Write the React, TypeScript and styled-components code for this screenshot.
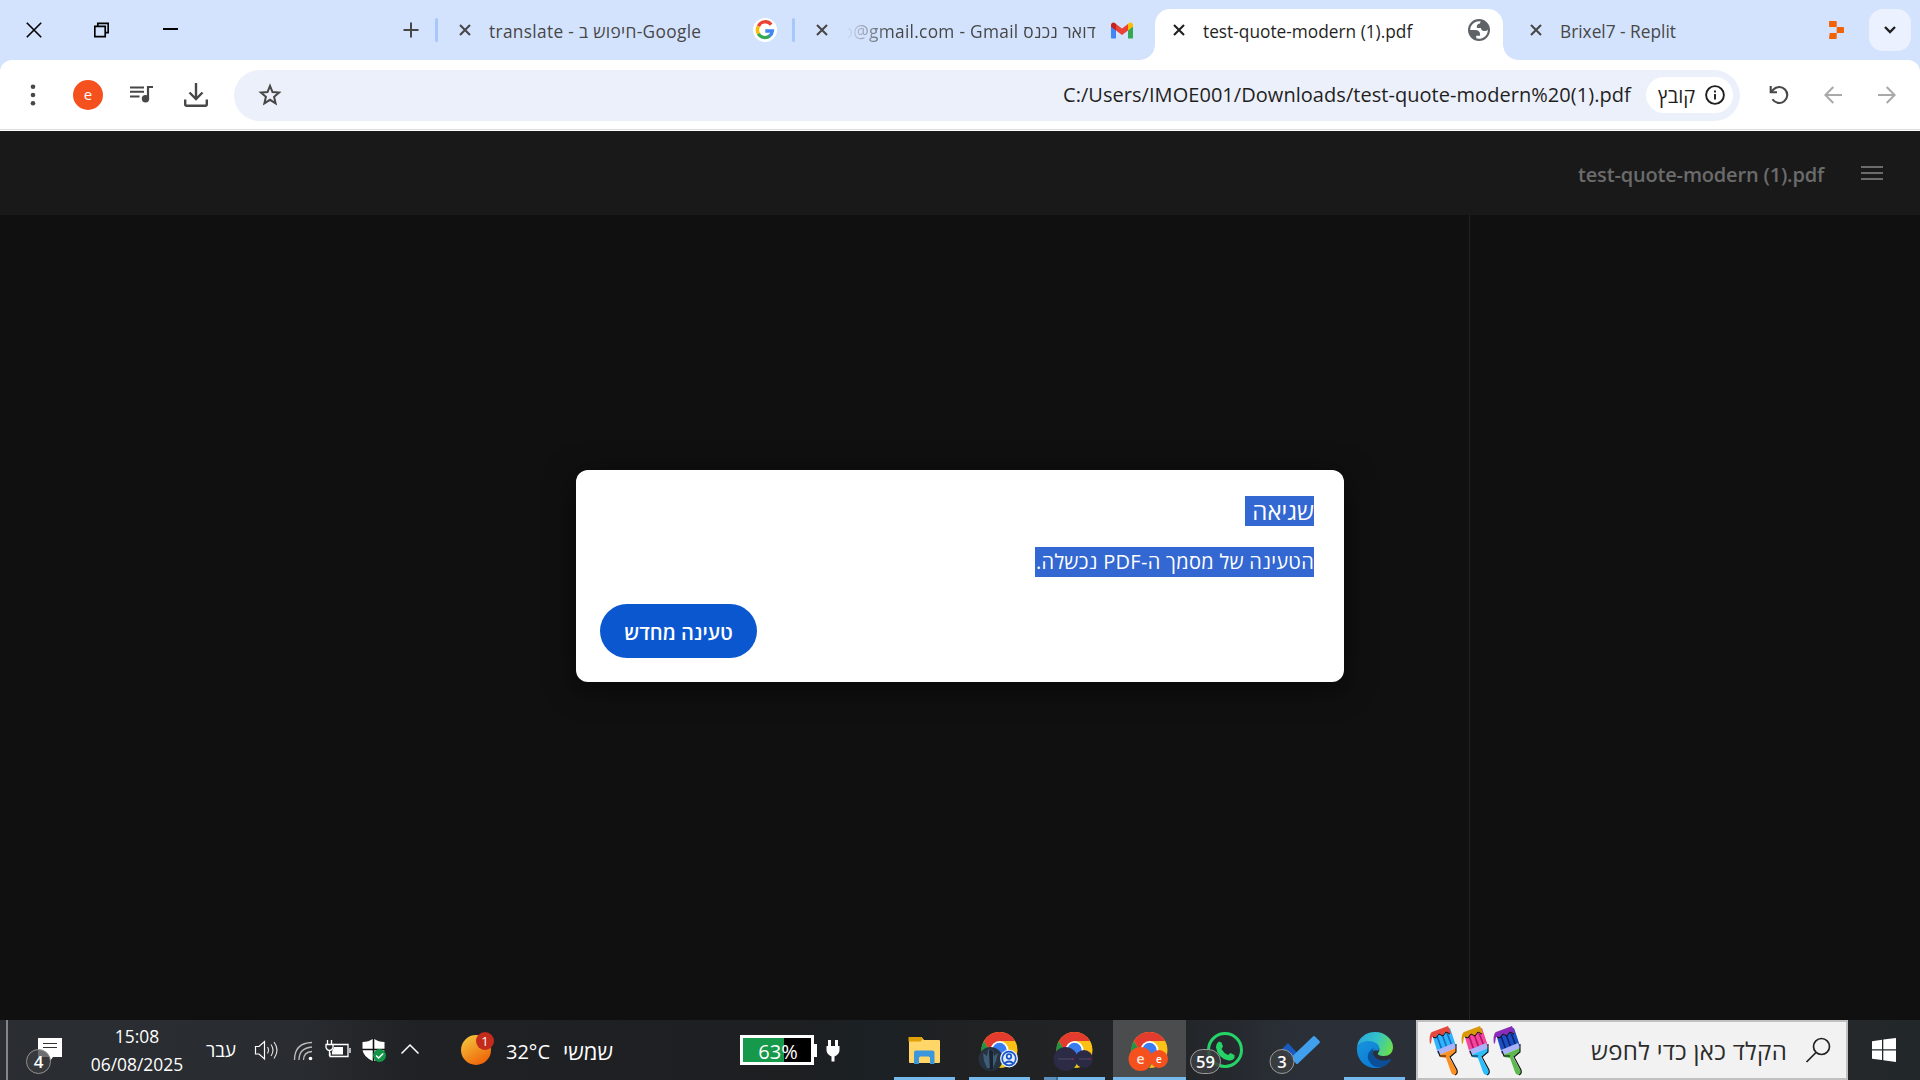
import React from "react";
import styled, { createGlobalStyle } from "styled-components";

const GlobalStyle = createGlobalStyle`
  * { box-sizing: border-box; }
  body { margin: 0; background: #101010; overflow: hidden; }
  body, input, button { font-family: "Open Sans", "Noto Sans", "DejaVu Sans", sans-serif; }
  svg { display: block; flex: none; }
`;

const Screen = styled.div`
  width: 1920px;
  height: 1080px;
  display: flex;
  flex-direction: column;
  overflow: hidden;
`;

/* ---------- shared ---------- */

const Slot = styled.div<{ $gap?: number }>`
  flex: none;
  margin-left: ${(p) => p.$gap ?? 0}px;
`;

type IconProps = { box: [number, number, number, number]; gap?: number; children: React.ReactNode };
const Icon = ({ box, gap, children }: IconProps) => (
  <Slot $gap={gap}>
    <svg width={box[2]} height={box[3]} viewBox={box.join(" ")} fill="none">
      {children}
    </svg>
  </Slot>
);

const Text = styled.span<{ $w: number; $gap?: number; $ls?: number; $dy?: number }>`
  flex: none;
  width: ${(p) => p.$w}px;
  margin-left: ${(p) => p.$gap ?? 0}px;
  margin-top: ${(p) => p.$dy ?? 0}px;
  letter-spacing: ${(p) => p.$ls ?? 0}px;
  white-space: pre;
`;

/* ---------- tab strip ---------- */

const TabStrip = styled.div`
  flex: none;
  height: 60px;
  display: flex;
  align-items: center;
  background: #d3e3fd;
`;

const Tab = styled.div<{ $w: number }>`
  flex: none;
  width: ${(p) => p.$w}px;
  height: 60px;
  display: flex;
  align-items: center;
`;

const ActiveTab = styled(Tab)`
  height: 51px;
  margin-top: 9px;
  padding-bottom: 9px;
  background: #fff;
  border-radius: 15px 15px 0 0;
  position: relative;
  &::before,
  &::after {
    content: "";
    position: absolute;
    bottom: 0;
    width: 15px;
    height: 15px;
  }
  &::before {
    left: -15px;
    background: radial-gradient(circle at 0 0, transparent 14.5px, #fff 15px);
  }
  &::after {
    right: -15px;
    background: radial-gradient(circle at 100% 0, transparent 14.5px, #fff 15px);
  }
`;

const TabTitle = styled(Text)<{ $active?: boolean; $fade?: boolean }>`
  font-size: 17.3px;
  line-height: 24px;
  color: ${(p) => (p.$active ? "#1f1f1f" : "#474747")};
  ${(p) =>
    p.$fade &&
    `direction: rtl; overflow: hidden; mask-image: linear-gradient(to right, transparent, #000 44px);`}
`;

const Separator = styled.div<{ $gap?: number }>`
  flex: none;
  width: 3px;
  height: 24px;
  margin-left: ${(p) => p.$gap ?? 0}px;
  border-radius: 2px;
  background: #a8c7fa;
`;

const TabSearch = styled.button`
  flex: none;
  width: 42px;
  height: 42px;
  margin-left: 25px;
  padding: 0;
  border: 0;
  border-radius: 14px;
  background: #ebf1fe;
  display: flex;
  align-items: center;
  justify-content: center;
`;

const CloseIcon = ({ gap, color = "#474747" }: { gap: number; color?: string }) => (
  <Icon box={[0, 0, 12, 12]} gap={gap}>
    <path d="M1 1l10 10M11 1L1 11" stroke={color} strokeWidth="2.1" />
  </Icon>
);

/* ---------- toolbar ---------- */

const ToolbarBack = styled.div`
  flex: none;
  background: #d3e3fd;
`;

const Toolbar = styled.div`
  height: 71px;
  padding-bottom: 1px;
  display: flex;
  align-items: center;
  background: #fff;
  border-radius: 12px 12px 0 0;
  box-shadow: inset 0 -1px #fff, inset 0 -2px #dcdcdc;
`;

const Avatar = styled.div`
  flex: none;
  width: 30px;
  height: 30px;
  margin-left: 37px;
  border-radius: 50%;
  background: #f4511e;
  color: #fff;
  font-size: 15px;
  line-height: 29px;
  text-align: center;
`;

const AddressBar = styled.div`
  flex: none;
  width: 1506px;
  height: 51px;
  margin-left: 26px;
  border-radius: 26px;
  background: #ecf0fa;
  display: flex;
  align-items: center;
`;

const Url = styled(Text)`
  font-size: 20px;
  line-height: 30px;
  color: #1f1f1f;
`;

const Chip = styled.div`
  flex: none;
  width: 87px;
  height: 36px;
  margin-left: 15px;
  border-radius: 18px;
  background: #fff;
  color: #1f1f1f;
  font-size: 20px;
  display: flex;
  align-items: center;
`;

/* ---------- document viewer ---------- */

const PdfBar = styled.div`
  flex: none;
  height: 84px;
  background: #191919;
  display: flex;
  align-items: center;
`;

const PdfTitle = styled(Text)`
  font-size: 20px;
  line-height: 28px;
  font-weight: 600;
  color: #6b6b6b;
`;

const Viewer = styled.div`
  flex: 1;
  display: grid;
  grid-template-columns: 1469px 1fr;
  background: #101010;
  position: relative;
`;

const Sidebar = styled.div`
  grid-column: 2;
  border-left: 1px solid #232323;
`;

const Dialog = styled.div`
  position: absolute;
  left: 576px;
  top: 255px;
  width: 768px;
  height: 212px;
  padding: 26px 30px 24px 24px;
  border-radius: 12px;
  background: #fff;
  box-shadow: 0 6px 30px rgba(0, 0, 0, 0.55);
  direction: rtl;
  display: flex;
  flex-direction: column;
  align-items: flex-start;
`;

const DialogTitle = styled.div`
  height: 30px;
  width: 69px;
  background: #3367d1;
  color: #fff;
  font-size: 24px;
  line-height: 30px;
  white-space: pre;
`;

const DialogText = styled.div`
  height: 30px;
  width: 279px;
  margin-top: 21px;
  background: #3367d1;
  color: #fff;
  font-size: 20px;
  letter-spacing: 0.3px;
  line-height: 30px;
  white-space: pre;
`;

const ReloadButton = styled.button`
  align-self: flex-end;
  width: 157px;
  height: 54px;
  margin-top: 27px;
  padding: 2px 0 0;
  border: 0;
  border-radius: 27px;
  background: #0b57d0;
  color: #fff;
  font-size: 20px;
  font-weight: 600;
  white-space: nowrap;
`;

/* ---------- taskbar ---------- */

const Taskbar = styled.div`
  flex: none;
  height: 60px;
  display: flex;
  align-items: center;
  color: #fff;
  background: linear-gradient(90deg, #2a2d31 0, #292c30 300px, #1f2124 420px, #1d1f21 800px, #1b2125 880px, #202122 960px, #222528 1180px, #2b3038 1300px, #2b3038 1410px, #24282b 1850px, #22272a 1920px);
`;

const DesktopEdge = styled.div`
  width: 2px;
  height: 60px;
  margin-left: 6px;
  background: #858585;
`;

const Clock = styled.div`
  flex: none;
  width: 96px;
  margin-left: 25px;
  font-size: 17.4px;
  line-height: 28px;
  text-align: center;
  white-space: nowrap;
`;

const TrayText = styled(Text)`
  font-size: 18.5px;
  line-height: 26px;
`;

const WeatherText = styled(Text)<{ $size: number }>`
  font-size: ${(p) => p.$size}px;
  line-height: 28px;
`;

const Battery = styled.div`
  flex: none;
  width: 74px;
  height: 30px;
  margin-left: 126px;
  border: 3px solid #fff;
  background: linear-gradient(90deg, #16994a 41px, #000 41px);
  font-size: 20px;
  line-height: 28px;
  text-align: center;
  padding-left: 2px;
`;

const AppCell = styled.div<{ $state?: "open" | "active" | "stack" }>`
  flex: none;
  width: 75px;
  height: 60px;
  padding: 0 1px;
  display: flex;
  flex-direction: column;
  background: ${(p) => (p.$state === "active" ? "#4a4c4e" : "transparent")};
  background-clip: content-box;
  &::after {
    content: "";
    flex: none;
    height: 3px;
    margin: 0 ${(p) => (p.$state === "active" ? 0 : 6)}px;
    background: ${(p) =>
      !p.$state ? "transparent" : p.$state === "stack" ? "linear-gradient(90deg, #5a8fbd 12px, #3f6d93 12px 14px, #76b9ed 14px)" : "#76b9ed"};
  }
`;

const AppArt = ({ children }: { children: React.ReactNode }) => (
  <svg width="73" height="57" viewBox="0 0 73 57" fill="none">
    {children}
  </svg>
);

const ChromeMark = () => (
  <g transform="translate(36.5 30)">
    <circle r="18" fill="#fbc116" />
    <path d="M-15.6 -9A18 18 0 0 1 15.6 -9L0 -9L-7.8 4.5Z" fill="#e33b2e" />
    <path d="M-15.6 -9A18 18 0 0 0 0 18L7.8 4.5L-7.8 4.5Z" fill="#229342" />
    <circle r="9" fill="#fff" />
    <circle r="7.2" fill="#3a7df0" />
  </g>
);

const SearchBox = styled.div`
  flex: none;
  width: 432px;
  height: 60px;
  margin-left: 4px;
  border: 2px solid #c0c0c0;
  background: #f2f2f2;
  color: #2b2b2b;
  display: flex;
  align-items: center;
`;

const SearchText = styled(Text)`
  font-size: 24px;
  line-height: 30px;
`;

const Brush = ({ drip, hair, dark, handle }: { drip: string; hair: string; dark: string; handle: string }) => (
  <svg width="32" height="52" viewBox="0 0 32 52" fill="none">
    <path d="M3 10L21 4l6 18-18 8z" fill={hair} />
    <path d="M8 12l5 14M13 10l5 14M18 9l5 13" stroke={dark} strokeWidth="1.6" />
    <path d="M1 20c-1-6 0-11 2-12L19 2l3 7-3 1-3-2-3 4-4-2-3 4-3-1-1 6z" fill={drip} />
    <path d="M4 13l3 1 3-4 4 2 3-4 4 2" stroke="#111" strokeWidth="1" />
    <path d="M8 26l17-7 2 5-17 7z" fill="#a9b2fb" />
    <path d="M10 31l17-7 0 4-7 5 8 14q1 4-2 4-3 0-4-3L17 34l-6-1z" fill={handle} />
    <path d="M9 27l2 5 6 0M27 20v8l-6 5 7 13q1 4-2 5" stroke="#111" strokeWidth="1.1" />
  </svg>
);

export default function App() {
  return (
    <Screen>
      <GlobalStyle />
      <TabStrip>
        <Icon box={[0, 0, 16, 16]} gap={26}>
          <path d="M.8.8l14.4 14.4M15.2.8L.8 15.2" stroke="#000" strokeWidth="1.6" />
        </Icon>
        <Icon box={[0, 0, 15, 16]} gap={52}>
          <path d="M.8 4.8h10.4v10.4H.8zM3.8 4V1.8h10.4v9.4H12" transform="translate(0 -.5)" stroke="#000" strokeWidth="1.7" />
        </Icon>
        <Icon box={[0, 0, 15, 16]} gap={54}>
          <path d="M0 7h15" stroke="#000" strokeWidth="2" />
        </Icon>
        <Icon box={[0, 0, 16, 16]} gap={225}>
          <path d="M8 .5v15M.5 8h15" stroke="#474747" strokeWidth="2" />
        </Icon>
        <Separator $gap={16} />
        <Tab $w={354}>
          <CloseIcon gap={21} />
          <TabTitle $w={213} $gap={18} $dy={3} $ls={0.33}>translate - חיפוש ב-Google</TabTitle>
          <Icon box={[-12, -12, 24, 24]} gap={51}>
            <circle r="12" fill="#fff" />
            <path d="M6.2 -5.4A7.6 7.6 0 0 0 -6.6 -3.8" stroke="#ea4335" strokeWidth="3.3" />
            <path d="M-6.6 -3.8A7.6 7.6 0 0 0 -6.6 3.8" stroke="#fbbc05" strokeWidth="3.3" />
            <path d="M-6.6 3.8A7.6 7.6 0 0 0 4.9 5.8" stroke="#34a853" strokeWidth="3.3" />
            <path d="M.3 1H7.4A7.5 7.5 0 0 1 4.6 6" stroke="#4285f4" strokeWidth="3.3" />
          </Icon>
        </Tab>
        <Separator />
        <Tab $w={360}>
          <CloseIcon gap={21} />
          <TabTitle $w={250} $gap={18} $dy={3} $ls={0.3} $fade>{"דואר נכנס o@gmail.com - Gmail"}</TabTitle>
          <Icon box={[0, 0, 22, 17]} gap={15}>
            <path d="M0 3v12.4q0 1.2 1.2 1.2H5V6z" fill="#4285f4" />
            <path d="M22 3v12.4q0 1.2-1.2 1.2H17V6z" fill="#34a853" />
            <path d="M5 8.5V2l6 4.6L17 2v6.500L11 13z" fill="#ea4335" />
            <path d="M0 3v1.700L5 8.500V2L4 1C2.300-.2 0 .8 0 3z" fill="#c5221f" />
            <path d="M22 3v1.700L17 8.500V2l1-1C19.700-.2 22 .8 22 3z" fill="#fbbc04" />
          </Icon>
        </Tab>
        <ActiveTab $w={348}>
          <CloseIcon gap={18} color="#1f1f1f" />
          <TabTitle $w={210} $gap={18} $dy={3} $active>test-quote-modern (1).pdf</TabTitle>
          <Icon box={[0, 0, 22, 22]} gap={55}>
            <path
              transform="scale(1.1) translate(-2 -2)"
              fill="#5f6368"
              fillRule="evenodd"
              d="M12 2a10 10 0 1 0 0 20 10 10 0 0 0 0-20zM4 12h4.4c3.407.022 4.922 1.730 4.543 5.127H9.488v2.470a8.004 8.004 0 0 0 10.498-8.083C19.327 12.504 18.332 13 17 13c-2.137 0-3.206-.916-3.206-2.750h-3.748c-.274-2.728.683-4.092 2.870-4.092 0-.975.327-1.597.811-1.970A8.004 8.004 0 0 0 4 12z"
            />
          </Icon>
        </ActiveTab>
        <Tab $w={341}>
          <CloseIcon gap={27} />
          <TabTitle $w={115} $gap={18} $dy={3}>Brixel7 - Replit</TabTitle>
          <Icon box={[0, 0, 15, 18]} gap={154}>
            <path d="M.5 0H7q.7 0 .7.700V6H.7Q0 6 0 5.300V.700zM7.700 6h6.500q.8 0 .8.800v4.400q0 .8-.8.800H7.700zM.7 12h7v5.300q0 .7-.7.7H.7q-.7 0-.7-.7z" fill="#f26207" />
          </Icon>
        </Tab>
        <TabSearch>
          <Icon box={[0, 0, 14, 8]}>
            <path d="M2 1l5 5 5-5" stroke="#1f1f1f" strokeWidth="2.400" />
          </Icon>
        </TabSearch>
      </TabStrip>

      <ToolbarBack>
        <Toolbar>
          <Icon box={[0, 0, 6, 24]} gap={30}>
            <g fill="#474747">
              <circle cx="3" cy="3.700" r="2.300" />
              <circle cx="3" cy="12" r="2.300" />
              <circle cx="3" cy="20.300" r="2.300" />
            </g>
          </Icon>
          <Avatar>e</Avatar>
          <Icon box={[0, 0, 24, 18]} gap={27}>
            <path d="M0 1.500h14M0 5.700h14M0 10.500h9.500" stroke="#474747" strokeWidth="2" />
            <path d="M18 13V1h5" stroke="#474747" strokeWidth="2.200" />
            <circle cx="15.500" cy="12.800" r="3.700" fill="#474747" />
          </Icon>
          <Icon box={[0, 0, 24, 24]} gap={30}>
            <path d="M12 0v15M5.500 9.500l6.500 6.500 6.500-6.500M1.200 16.500v4.800q0 1.500 1.500 1.500h18.600q1.500 0 1.500-1.500v-4.800" stroke="#474747" strokeWidth="2.400" />
          </Icon>
          <AddressBar>
            <Icon box={[0, 0, 24, 24]} gap={24}>
              <path d="M12 2.800l2.500 6.200 6.600.500-5 4.300 1.500 6.500L12 16.800l-5.600 3.500 1.500-6.500-5-4.300 6.600-.5z" stroke="#474747" strokeWidth="2" />
            </Icon>
            <Url $w={568} $gap={781} $ls={0.045}>C:/Users/IMOE001/Downloads/test-quote-modern%20(1).pdf</Url>
            <Chip>
              <Text $w={37} $gap={12}>קובץ</Text>
              <Icon box={[-10, -10, 20, 20]} gap={10}>
                <circle r="8.900" stroke="#1f1f1f" strokeWidth="1.900" />
                <path d="M0-1v5.500M0-4.500v2" stroke="#1f1f1f" strokeWidth="1.900" />
              </Icon>
            </Chip>
          </AddressBar>
          <Icon box={[-10, -10, 20, 20]} gap={29}>
            <path d="M-6.500 4.300A8 8 0 1 0-5.800-5.300L-8-3" stroke="#474747" strokeWidth="2.100" />
            <path d="M-8.300-9v6.300H-2" stroke="#474747" strokeWidth="2.100" />
          </Icon>
          <Icon box={[0, 0, 18, 18]} gap={35}>
            <path d="M18 9H1.500M9.300 1L1.400 9l7.900 8" stroke="#a9a9a9" strokeWidth="2" />
          </Icon>
          <Icon box={[0, 0, 18, 18]} gap={36}>
            <path d="M0 9h16.500M8.700 1l7.900 8-7.900 8" stroke="#a9a9a9" strokeWidth="2" />
          </Icon>
        </Toolbar>
      </ToolbarBack>

      <PdfBar>
        <PdfTitle $w={246} $gap={1578} $dy={4} $ls={-0.17}>test-quote-modern (1).pdf</PdfTitle>
        <Icon box={[0, 0, 22, 14]} gap={37}>
          <path d="M0 1h22M0 7h22M0 13h22" stroke="#6b6b6b" strokeWidth="2" />
        </Icon>
      </PdfBar>

      <Viewer>
        <Sidebar />
        <Dialog>
          <DialogTitle>שגיאה</DialogTitle>
          <DialogText>הטעינה של מסמך ה-PDF נכשלה.</DialogText>
          <ReloadButton>טעינה מחדש</ReloadButton>
        </Dialog>
      </Viewer>

      <Taskbar>
        <DesktopEdge />
        <Icon box={[24, 1020, 40, 60]} gap={16}>
          <path d="M38 1038h24v19h-9l-3 4v-4H38z" fill="#fff" />
          <path d="M43 1043.500h14M43 1047.500h14" stroke="#333" strokeWidth="1.200" />
          <circle cx="38.500" cy="1061.500" r="12" fill="#3c3e41" fillOpacity=".75" stroke="#909090" />
          <text x="38.500" y="1067.500" textAnchor="middle" fontSize="17" fontWeight="600" fill="#fff">4</text>
        </Icon>
        <Clock>
          <div>15:08</div>
          <div>06/08/2025</div>
        </Clock>
        <TrayText $w={30} $gap={21}>עבר</TrayText>
        <Icon box={[254, 1038, 26, 24]} gap={18}>
          <path d="M255.500 1046.500h3.500l5.500-5v17.500l-5.500-5h-3.500z" stroke="#fff" strokeWidth="1.200" />
          <path d="M267.500 1047q2 3 0 6.500M271 1044.500q4 5.500 0 11.500M274 1042q6 8 0 16.500" stroke="#ddd" strokeWidth="1.200" />
        </Icon>
        <Icon box={[292, 1038, 24, 24]} gap={12}>
          <path d="M294.500 1060q0-17 17.500-17.500M299 1060q0-12 13-13M303.500 1060q0-8 8.500-8.500" stroke="#bbb" strokeWidth="1.300" />
          <circle cx="310.500" cy="1058.500" r="1.800" fill="#fff" />
        </Icon>
        <Icon box={[324, 1038, 28, 24]} gap={8}>
          <path d="M333 1044.500h15v12h-18v-4" stroke="#fff" strokeWidth="1.300" />
          <path d="M334 1047h9v7.500h-11v-3z" fill="#fff" />
          <path d="M350 1048v5M327.500 1040v4M331.500 1040v4M326 1044.500h7v3q-1 3-3.500 3t-3.500-3zM329.500 1050v6" stroke="#fff" strokeWidth="1.300" />
        </Icon>
        <Icon box={[360, 1036, 28, 28]} gap={8}>
          <path d="M373.500 1038.500q5 3.500 11 3.500v8q-1 7-11 11.500-10-4.500-11-11.500v-8q6 0 11-3.500z" fill="#fff" />
          <path d="M373.500 1038v24M362 1049.500h23" stroke="#111" strokeWidth="1.600" />
          <circle cx="379.500" cy="1055.500" r="6.500" fill="#149447" />
          <path d="M376 1055.500l2.600 2.600 4.600-4.600" stroke="#fff" strokeWidth="1.400" />
        </Icon>
        <Icon box={[400, 1040, 20, 20]} gap={12}>
          <path d="M401.500 1053.500l8.500-8.500 8.500 8.500" stroke="#fff" strokeWidth="1.500" />
        </Icon>
        <Icon box={[460, 1030, 36, 40]} gap={40}>
          <defs>
            <linearGradient id="sun" x1="0.200" y1="0.100" x2="0.700" y2="0.900">
              <stop stopColor="#f3bd38" />
              <stop offset="1" stopColor="#f0690c" />
            </linearGradient>
          </defs>
          <circle cx="476" cy="1050" r="15" fill="url(#sun)" />
          <circle cx="485" cy="1041" r="9" fill="#c42b1c" />
          <text x="485" y="1046" textAnchor="middle" fontSize="13" fill="#fff">1</text>
        </Icon>
        <WeatherText $size={20} $w={43} $gap={10} $dy={3}>32°C</WeatherText>
        <WeatherText $size={22} $w={51} $gap={14} $dy={1}>שמשי</WeatherText>
        <Battery>63%</Battery>
        <Icon box={[814, 1038, 26, 25]}>
          <path d="M814 1044h3v13h-3z" fill="#fff" />
          <path d="M828 1040h3v6h4v-6h3v6h1.500v4q0 4-5 6.500v5h-3v-5q-5-2.500-5-6.500v-4h1.500z" fill="#fff" />
        </Icon>
        <Slot $gap={47} />
        <AppCell $state="open">
          <AppArt>
            <path d="M21 18.500q0-1.500 1.500-1.500h11l2.500 3h15q1 0 1 1v21q0 1-1 1H22q-1 0-1-1z" fill="#ffd667" />
            <path d="M20.500 17.500q0-.5.500-.500h12.500l1.500 2-2.500 2.500h-12z" fill="#e0a008" />
            <path d="M26 44V32.500q0-2 2-2h16.500q2 0 2 2V44H42v-6q0-1.500-1.500-1.500h-8q-1.500 0-1.500 1.500v6z" fill="#3b96dc" />
          </AppArt>
        </AppCell>
        <AppCell $state="open">
          <AppArt>
            <ChromeMark />
            <circle cx="27.500" cy="39" r="12" fill="#26323f" />
            <path d="M20 33l4 3 1-6 3-1 2 2 1 5 4-3-2 8-3 7h-6l-3-7z" fill="#3f5d75" />
            <path d="M26 31l2-2 2 3v17l-3 1z" fill="#1a2330" />
            <circle cx="46" cy="38.500" r="9" fill="#e4edfc" />
            <g stroke="#1a56c8" strokeWidth="1.700">
              <circle cx="46" cy="38.500" r="6.800" />
              <circle cx="46" cy="36.500" r="2.300" />
              <path d="M41.500 43.500q4.500-4 9 0" />
            </g>
          </AppArt>
        </AppCell>
        <AppCell $state="stack">
          <AppArt>
            <ChromeMark />
            <circle cx="46" cy="39" r="9" fill="#2b2a45" />
            <circle cx="27.500" cy="39" r="12" fill="#2c2b46" />
            <path d="M20 39h13M41 39h9" stroke="#4d4c63" strokeWidth="1.200" />
            <path d="M33.500 39h2M50.500 39h2" stroke="#a03050" strokeWidth="1.500" />
          </AppArt>
        </AppCell>
        <AppCell $state="active">
          <AppArt>
            <ChromeMark />
            <circle cx="46" cy="39" r="9" fill="#f4511e" />
            <circle cx="27.500" cy="39" r="12" fill="#f4511e" />
            <text x="27.500" y="43.500" textAnchor="middle" fontSize="14" fontWeight="600" fill="#ffe3da">e</text>
            <text x="46" y="42.500" textAnchor="middle" fontSize="10" fontWeight="600" fill="#fff">e</text>
          </AppArt>
        </AppCell>
        <AppCell>
          <AppArt>
            <circle cx="37" cy="30" r="16.500" stroke="#25d366" strokeWidth="3" />
            <path d="M31 21.500l2.500 1 1.500 4-1.500 2.500q2 4 6.500 6l2.500-2 4 2v3q-2 3-6 2.500-11-2.500-12.500-13 0-4 3-6z" fill="#25d366" />
            <rect x="2.500" y="29.500" width="30" height="24" rx="12" fill="#3c3e41" fillOpacity=".85" stroke="#9a9a9a" />
            <text x="17.500" y="47.500" textAnchor="middle" fontSize="16.500" fontWeight="600" fill="#fff">59</text>
          </AppArt>
        </AppCell>
        <AppCell>
          <AppArt>
            <path d="M19 29l6-6 12 13-6 6z" fill="#185abd" />
            <path d="M28 37.500L50 16.500q1-1 2 0l4.500 4.500q1 1 0 2L35 43.500q-1 1-2 0z" fill="#41a0ee" />
            <circle cx="19" cy="41.500" r="12" fill="#3c3e41" fillOpacity=".85" stroke="#9a9a9a" />
            <text x="19" y="47.500" textAnchor="middle" fontSize="16.500" fontWeight="600" fill="#fff">3</text>
          </AppArt>
        </AppCell>
        <AppCell $state="open">
          <AppArt>
            <defs>
              <linearGradient id="edgeTop" x1="0" y1="0.300" x2="1" y2="0.600">
                <stop stopColor="#2aa7dd" />
                <stop offset=".5" stopColor="#33c3c8" />
                <stop offset="1" stopColor="#6be04a" />
              </linearGradient>
              <linearGradient id="edgeBody" x1="0" y1="0" x2="0.600" y2="1">
                <stop stopColor="#1893dc" />
                <stop offset="1" stopColor="#0b7bd6" />
              </linearGradient>
            </defs>
            <path d="M19 27C20 18 28 12 37 12c11 0 18 8 18 15 0 6-4 9-9 9-4 0-7-1-6-3 3-3 1-7-2-9-7-4-16-2-19 3z" fill="url(#edgeTop)" />
            <path d="M19 27c3-6 13-8 19-4 3 2 4 5 2 8-2-2-7 0-7 5 0 5 4 11 11 11-2 1-5 1-7 1-11 0-19-10-18-21z" fill="url(#edgeBody)" />
            <path d="M36 28c-5 2-8 8-5 13 3 6 9 7 13 6 4-1 7-4 9-7 0-1 0-1-1-1-8 4-16 0-17-6 0-2 0-4 1-5z" fill="#0c4f99" />
          </AppArt>
        </AppCell>
        <SearchBox>
          <Slot $gap={11} />
          <Brush drip="#e8483b" hair="#2fb4fb" dark="#1668c0" handle="#fb8f22" />
          <Brush drip="#d99a08" hair="#f2479c" dark="#b01566" handle="#2cbdfb" />
          <Brush drip="#8a2cb8" hair="#1d4fc4" dark="#0c2470" handle="#5db950" />
          <SearchText $w={196} $gap={66} $dy={2} $ls={0.3}>הקלד כאן כדי לחפש</SearchText>
          <Icon box={[0, 0, 26, 26]} gap={18}>
            <circle cx="16.500" cy="9.500" r="8" stroke="#222" strokeWidth="1.700" />
            <path d="M11 15.500L1.500 25" stroke="#222" strokeWidth="1.700" />
          </Icon>
        </SearchBox>
        <Icon box={[0, 0, 24, 24]} gap={24}>
          <path d="M0 3.200L10 1.800v9.500H0zM11.300 1.600L24 0v11.300H11.300zM0 12.600h10v9.500L0 20.800zM11.300 12.600H24V24l-12.700-1.700z" fill="#fff" />
        </Icon>
      </Taskbar>
    </Screen>
  );
}
